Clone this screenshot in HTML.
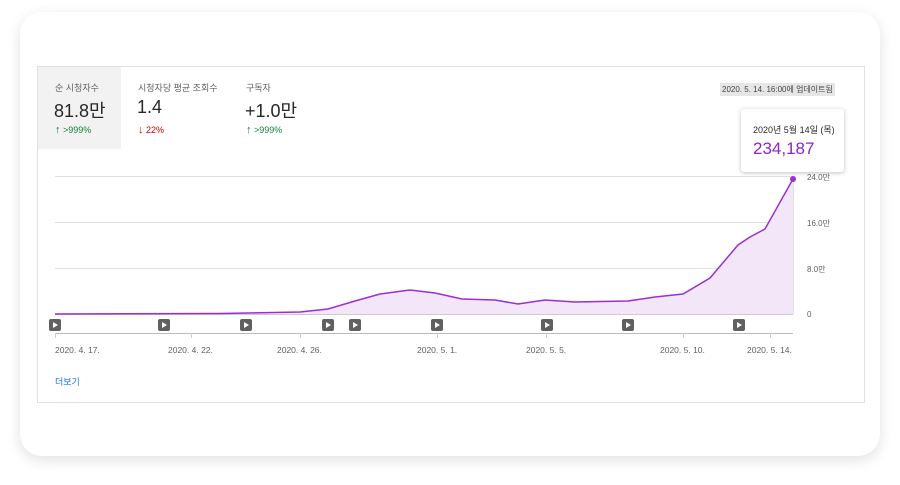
<!DOCTYPE html>
<html><head><meta charset="utf-8"><style>
*{margin:0;padding:0;box-sizing:border-box}
body{width:900px;height:485px;background:#fff;font-family:"Liberation Sans","Noto Sans CJK KR",sans-serif;position:relative;overflow:hidden}
.card{position:absolute;left:20px;top:12px;width:860px;height:444px;background:#fff;border-radius:22px;box-shadow:0 4px 14px rgba(0,0,0,.12)}
.panel{position:absolute;left:37px;top:66px;width:828px;height:337px;border:1px solid #e0e0e0;background:#fff}
.t{position:absolute;white-space:nowrap}
.tab{position:absolute;top:0;height:82px}
.lbl{font-size:9px;color:#606060}
.val{font-size:18px;color:#282828}
.ch{font-size:9px}
.ch b{font-size:11px;font-weight:bold}
.ax{font-size:8px;color:#606060}
.dt{font-size:8.5px;color:#606060}
.pl{position:absolute;top:319px;width:12px;height:12px;background:#606060;border-radius:2px}
.pl:after{content:"";position:absolute;left:4px;top:3px;border-left:5px solid #fff;border-top:3px solid transparent;border-bottom:3px solid transparent}
</style></head><body>
<div class="card"></div>
<div class="panel">
<div class="tab" style="left:0;width:83px;background:#f2f2f2"></div>
</div>
<div class="t lbl" style="left:55px;top:81px">순 시청자수</div>
<div class="t val" style="left:54px;top:97px">81.8만</div>
<div class="t ch" style="left:55px;top:124px;color:#188038"><b>↑</b> &gt;999%</div>
<div class="t lbl" style="left:138px;top:81px">시청자당 평균 조회수</div>
<div class="t val" style="left:137px;top:97px">1.4</div>
<div class="t ch" style="left:138px;top:124px;color:#cc0000"><b>↓</b> 22%</div>
<div class="t lbl" style="left:246px;top:81px">구독자</div>
<div class="t val" style="left:245px;top:97px">+1.0만</div>
<div class="t ch" style="left:246px;top:124px;color:#188038"><b>↑</b> &gt;999%</div>
<div class="t" style="left:720px;top:83px;font-size:8px;color:#444;background:#e6e6e6;padding:1px 2px">2020. 5. 14. 16:00에 업데이트됨</div>
<div class="t" style="left:741px;top:109px;width:103px;height:63px;background:#fff;border-radius:3px;box-shadow:0 1px 4px rgba(0,0,0,.25)">
<div class="t" style="left:12px;top:14px;font-size:9px;color:#282828">2020년 5월 14일 (목)</div>
<div class="t" style="left:12px;top:30px;font-size:17px;color:#8e24c8">234,187</div>
</div>
<svg class="t" style="left:0;top:0" width="900" height="485">
<g stroke="#e0e0e0" stroke-width="1"><line x1="55" y1="176.5" x2="793" y2="176.5"/><line x1="55" y1="222.5" x2="793" y2="222.5"/><line x1="55" y1="268.5" x2="793" y2="268.5"/><line x1="793.5" y1="176" x2="793.5" y2="314"/></g>
<path d="M55,314 L220,313.5 L300,312 L328,309 L355,301 L380,294 L410,290 L435,293 L462,299 L495,300 L518,304 L545,300 L575,302 L628,301 L655,297 L683,294 L710,278 L738,245 L750,237 L765,229 L793,179 L793,314 Z" fill="#f3e6f8"/>
<line x1="55" y1="314.5" x2="793" y2="314.5" stroke="#ccc"/>
<path d="M55,314 L220,313.5 L300,312 L328,309 L355,301 L380,294 L410,290 L435,293 L462,299 L495,300 L518,304 L545,300 L575,302 L628,301 L655,297 L683,294 L710,278 L738,245 L750,237 L765,229 L793,179" fill="none" stroke="#9c2fcf" stroke-width="1.5"/>
<circle cx="793" cy="179" r="3" fill="#9c2fcf"/>
<line x1="55" y1="333.5" x2="793" y2="333.5" stroke="#bbb"/>
<g stroke="#ccc"><line x1="55.5" y1="333" x2="55.5" y2="338"/><line x1="191.5" y1="333" x2="191.5" y2="338"/><line x1="300.5" y1="333" x2="300.5" y2="338"/><line x1="437.5" y1="333" x2="437.5" y2="338"/><line x1="546.5" y1="333" x2="546.5" y2="338"/><line x1="683.5" y1="333" x2="683.5" y2="338"/><line x1="770.5" y1="333" x2="770.5" y2="338"/></g>
</svg>
<div class="t ax" style="left:807px;top:172px">24.0만</div>
<div class="t ax" style="left:807px;top:218px">16.0만</div>
<div class="t ax" style="left:807px;top:264px">8.0만</div>
<div class="t ax" style="left:807px;top:310px">0</div>
<div class="pl" style="left:49px"></div><div class="pl" style="left:158px"></div><div class="pl" style="left:240px"></div><div class="pl" style="left:322px"></div><div class="pl" style="left:349px"></div><div class="pl" style="left:431px"></div><div class="pl" style="left:541px"></div><div class="pl" style="left:622px"></div><div class="pl" style="left:733px"></div>
<div class="t dt" style="left:55px;top:345px">2020. 4. 17.</div>
<div class="t dt" style="left:168px;top:345px">2020. 4. 22.</div>
<div class="t dt" style="left:277px;top:345px">2020. 4. 26.</div>
<div class="t dt" style="left:417px;top:345px">2020. 5. 1.</div>
<div class="t dt" style="left:526px;top:345px">2020. 5. 5.</div>
<div class="t dt" style="left:660px;top:345px">2020. 5. 10.</div>
<div class="t dt" style="left:747px;top:345px">2020. 5. 14.</div>
<div class="t" style="left:55px;top:375px;font-size:9px;color:#1a73e8">더보기</div>
</body></html>
